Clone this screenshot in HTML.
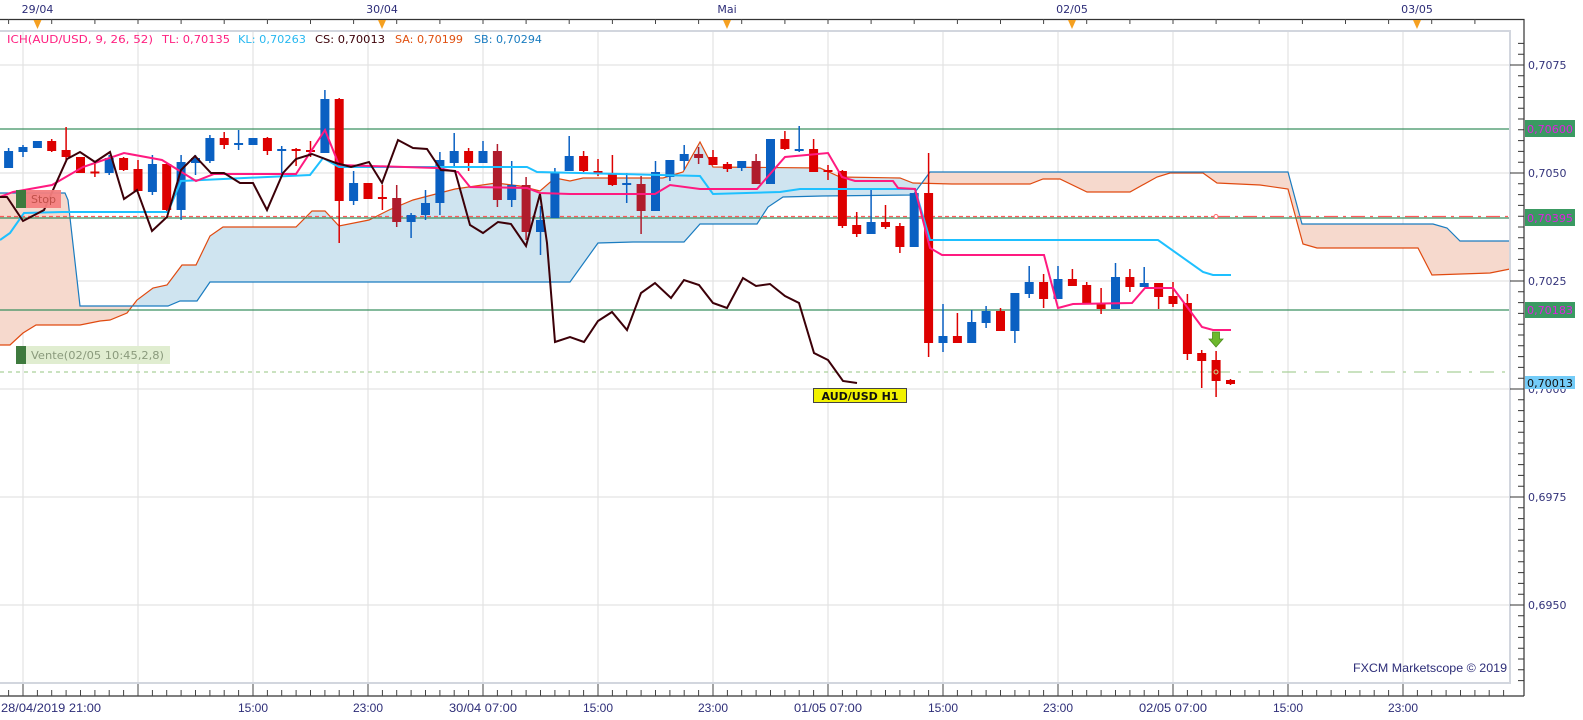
<!DOCTYPE html>
<html><head><meta charset="utf-8"><style>
html,body{margin:0;padding:0;background:#fff;width:1583px;height:720px;overflow:hidden}
svg{display:block}
.t{font-family:"DejaVu Sans","Liberation Sans",sans-serif;font-size:11px}
.n{font-family:"Liberation Sans Narrow","Liberation Sans",sans-serif;font-size:12px;fill:#2d2d78}
</style></head><body>
<svg width="1583" height="720" viewBox="0 0 1583 720" xmlns="http://www.w3.org/2000/svg">
<defs>
<clipPath id="cb"><rect x="137" y="0" width="782" height="720"/></clipPath>
<clipPath id="cs"><rect x="0" y="0" width="137" height="720"/><rect x="919" y="0" width="600" height="720"/></clipPath>
</defs>
<g stroke="#e3e3e3" stroke-width="1.2">
<path d="M23 31V683M138 31V683M253 31V683M368 31V683M483 31V683M598 31V683M713 31V683M828 31V683M943 31V683M1058 31V683M1173 31V683M1288 31V683M1403 31V683"/>
<path d="M0 65H1510M0 173H1510M0 281H1510M0 389H1510M0 497H1510M0 605H1510"/>
</g>
<g id="cloud">
<polygon clip-path="url(#cb)" fill="#cfe4f0" points="0,345 10,345 23,333 36,325 80,325 100,321 110,320 127,313 137,300 153,288 167,285 182,265 196,265 210,236 223,227 296,227 312,211 325,211 339,226 369,220 389,210 413,200 455,189 496,183 520,186 540,191 555,178 570,181 583,178 663,178 683,172 700,142 713,167 820,168 840,177 900,178 913,183 952,184 1030,184 1043,179 1060,179 1087,192 1130,192 1157,177 1170,173 1203,173 1217,183 1260,185 1288,189 1303,244 1317,248 1418,248 1432,275 1490,273 1510,269 1510,241 1460,241 1447,228 1433,224 1302,224 1288,172 930,172 913,195 822,196 783,197 768,207 757,224 700,224 684,242 633,242 598,243 570,282 210,282 197,301 180,301 168,306 80,306 68,200 65,193 0,193"/>
<polygon clip-path="url(#cs)" fill="#f6d9cd" points="0,345 10,345 23,333 36,325 80,325 100,321 110,320 127,313 137,300 153,288 167,285 182,265 196,265 210,236 223,227 296,227 312,211 325,211 339,226 369,220 389,210 413,200 455,189 496,183 520,186 540,191 555,178 570,181 583,178 663,178 683,172 700,142 713,167 820,168 840,177 900,178 913,183 952,184 1030,184 1043,179 1060,179 1087,192 1130,192 1157,177 1170,173 1203,173 1217,183 1260,185 1288,189 1303,244 1317,248 1418,248 1432,275 1490,273 1510,269 1510,241 1460,241 1447,228 1433,224 1302,224 1288,172 930,172 913,195 822,196 783,197 768,207 757,224 700,224 684,242 633,242 598,243 570,282 210,282 197,301 180,301 168,306 80,306 68,200 65,193 0,193"/>
</g>
<polyline fill="none" stroke="#e04a10" stroke-width="1.2" points="0,345 10,345 23,333 36,325 80,325 100,321 110,320 127,313 137,300 153,288 167,285 182,265 196,265 210,236 223,227 296,227 312,211 325,211 339,226 369,220 389,210 413,200 455,189 496,183 520,186 540,191 555,178 570,181 583,178 663,178 683,172 700,142 713,167 820,168 840,177 900,178 913,183 952,184 1030,184 1043,179 1060,179 1087,192 1130,192 1157,177 1170,173 1203,173 1217,183 1260,185 1288,189 1303,244 1317,248 1418,248 1432,275 1490,273 1510,269"/>
<polyline fill="none" stroke="#1a7cc0" stroke-width="1.2" points="0,193 65,193 68,200 80,306 168,306 180,301 197,301 210,282 570,282 598,243 633,242 684,242 700,224 757,224 768,207 783,197 822,196 913,195 930,172 1288,172 1302,224 1433,224 1447,228 1460,241 1510,241"/>
<g stroke="#3a9060" stroke-width="1.3"><path d="M0 129H1510M0 218H1510M0 310H1510"/></g>
<path d="M0 216.5H1216" stroke="#ff5a5a" stroke-width="1.2" stroke-dasharray="4 3"/>
<path d="M1216 216.5H1510" stroke="#ff5a5a" stroke-width="1.2" stroke-dasharray="14 5 3 5"/>
<path d="M0 372H1216" stroke="#aad09a" stroke-width="1.2" stroke-dasharray="4 4"/>
<path d="M1216 372H1510" stroke="#aad09a" stroke-width="1.2" stroke-dasharray="14 8 3 8"/>
<circle cx="1216" cy="216.5" r="2" fill="#fff" stroke="#ff6a6a"/>
<g fill="#0a60c2" stroke="#0a60c2" stroke-width="1.5">
<g transform="translate(8.6,0)"><path d="M0 148V168"/><rect x="-4.5" y="151" width="9" height="17" stroke="none"/></g>
<g transform="translate(23,0)"><path d="M0 145V157"/><rect x="-4.5" y="147" width="9" height="5" stroke="none"/></g>
<g transform="translate(37.4,0)"><rect x="-4.5" y="141" width="9" height="7" stroke="none"/></g>
<g transform="translate(109.2,0)"><path d="M0 155V175"/><rect x="-4.5" y="158" width="9" height="15" stroke="none"/></g>
<g transform="translate(152.4,0)"><path d="M0 155V195"/><rect x="-4.5" y="164" width="9" height="28" stroke="none"/></g>
<g transform="translate(181.1,0)"><path d="M0 155V220"/><rect x="-4.5" y="162" width="9" height="48" stroke="none"/></g>
<g transform="translate(195.5,0)"><path d="M0 155V175"/><rect x="-4.5" y="158" width="9" height="5" stroke="none"/></g>
<g transform="translate(209.9,0)"><path d="M0 135V163"/><rect x="-4.5" y="138" width="9" height="23" stroke="none"/></g>
<g transform="translate(238.6,0)"><path d="M0 130V150"/><rect x="-4.5" y="143" width="9" height="2" stroke="none"/></g>
<g transform="translate(253,0)"><rect x="-4.5" y="138" width="9" height="7" stroke="none"/></g>
<g transform="translate(281.7,0)"><path d="M0 146V176"/><rect x="-4.5" y="149" width="9" height="2" stroke="none"/></g>
<g transform="translate(324.9,0)"><path d="M0 90V153"/><rect x="-4.5" y="99" width="9" height="54" stroke="none"/></g>
<g transform="translate(353.6,0)"><path d="M0 171V205"/><rect x="-4.5" y="183" width="9" height="18" stroke="none"/></g>
<g transform="translate(411.1,0)"><path d="M0 213V238"/><rect x="-4.5" y="215" width="9" height="7" stroke="none"/></g>
<g transform="translate(425.5,0)"><path d="M0 190V220"/><rect x="-4.5" y="203" width="9" height="12" stroke="none"/></g>
<g transform="translate(439.9,0)"><path d="M0 152V215"/><rect x="-4.5" y="160" width="9" height="43" stroke="none"/></g>
<g transform="translate(454.2,0)"><path d="M0 133V166"/><rect x="-4.5" y="151" width="9" height="12" stroke="none"/></g>
<g transform="translate(483,0)"><path d="M0 141V163"/><rect x="-4.5" y="151" width="9" height="12" stroke="none"/></g>
<g transform="translate(511.7,0)"><path d="M0 161V207"/><rect x="-4.5" y="185" width="9" height="15" stroke="none"/></g>
<g transform="translate(540.5,0)"><path d="M0 206V255"/><rect x="-4.5" y="220" width="9" height="12" stroke="none"/></g>
<g transform="translate(554.9,0)"><path d="M0 168V218"/><rect x="-4.5" y="172" width="9" height="46" stroke="none"/></g>
<g transform="translate(569.2,0)"><path d="M0 136V171"/><rect x="-4.5" y="156" width="9" height="15" stroke="none"/></g>
<g transform="translate(626.7,0)"><path d="M0 173V203"/><rect x="-4.5" y="183" width="9" height="2" stroke="none"/></g>
<g transform="translate(655.5,0)"><path d="M0 161V211"/><rect x="-4.5" y="172" width="9" height="39" stroke="none"/></g>
<g transform="translate(669.9,0)"><path d="M0 160V181"/><rect x="-4.5" y="160" width="9" height="17" stroke="none"/></g>
<g transform="translate(684.2,0)"><path d="M0 145V170"/><rect x="-4.5" y="154" width="9" height="7" stroke="none"/></g>
<g transform="translate(741.7,0)"><path d="M0 161V171"/><rect x="-4.5" y="161" width="9" height="7" stroke="none"/></g>
<g transform="translate(770.5,0)"><rect x="-4.5" y="139" width="9" height="45" stroke="none"/></g>
<g transform="translate(799.2,0)"><path d="M0 126V152"/><rect x="-4.5" y="149" width="9" height="2" stroke="none"/></g>
<g transform="translate(871.1,0)"><path d="M0 190V234"/><rect x="-4.5" y="222" width="9" height="12" stroke="none"/></g>
<g transform="translate(914.2,0)"><rect x="-4.5" y="193" width="9" height="54" stroke="none"/></g>
<g transform="translate(943,0)"><path d="M0 304V352"/><rect x="-4.5" y="336" width="9" height="7" stroke="none"/></g>
<g transform="translate(971.7,0)"><path d="M0 310V343"/><rect x="-4.5" y="322" width="9" height="21" stroke="none"/></g>
<g transform="translate(986.1,0)"><path d="M0 306V328"/><rect x="-4.5" y="311" width="9" height="12" stroke="none"/></g>
<g transform="translate(1014.9,0)"><path d="M0 293V343"/><rect x="-4.5" y="293" width="9" height="38" stroke="none"/></g>
<g transform="translate(1029.2,0)"><path d="M0 266V298"/><rect x="-4.5" y="282" width="9" height="12" stroke="none"/></g>
<g transform="translate(1058,0)"><path d="M0 266V299"/><rect x="-4.5" y="279" width="9" height="20" stroke="none"/></g>
<g transform="translate(1115.5,0)"><path d="M0 263V309"/><rect x="-4.5" y="277" width="9" height="32" stroke="none"/></g>
<g transform="translate(1144.2,0)"><path d="M0 267V287"/><rect x="-4.5" y="283" width="9" height="4" stroke="none"/></g>
</g>
<g fill="#dd0000" stroke="#dd0000" stroke-width="1.5">
<g transform="translate(51.7,0)"><path d="M0 139V152"/><rect x="-4.5" y="141" width="9" height="10" stroke="none"/></g>
<g transform="translate(66.1,0)"><path d="M0 127V160"/><rect x="-4.5" y="150" width="9" height="7" stroke="none"/></g>
<g transform="translate(80.5,0)"><rect x="-4.5" y="157" width="9" height="16" stroke="none"/></g>
<g transform="translate(94.9,0)"><path d="M0 163V177"/><rect x="-4.5" y="171.5" width="9" height="2" stroke="none"/></g>
<g transform="translate(123.6,0)"><path d="M0 157V171"/><rect x="-4.5" y="158" width="9" height="12" stroke="none"/></g>
<g transform="translate(138,0)"><path d="M0 160V191"/><rect x="-4.5" y="169" width="9" height="22" stroke="none"/></g>
<g transform="translate(166.7,0)"><path d="M0 163V211"/><rect x="-4.5" y="164" width="9" height="46" stroke="none"/></g>
<g transform="translate(224.2,0)"><path d="M0 132V149"/><rect x="-4.5" y="138" width="9" height="7" stroke="none"/></g>
<g transform="translate(267.4,0)"><path d="M0 137V155"/><rect x="-4.5" y="138" width="9" height="13" stroke="none"/></g>
<g transform="translate(296.1,0)"><path d="M0 148V166"/><rect x="-4.5" y="149" width="9" height="2" stroke="none"/></g>
<g transform="translate(310.5,0)"><path d="M0 141V157"/><rect x="-4.5" y="150" width="9" height="2" stroke="none"/></g>
<g transform="translate(339.2,0)"><path d="M0 98V243"/><rect x="-4.5" y="99" width="9" height="102" stroke="none"/></g>
<g transform="translate(368,0)"><rect x="-4.5" y="183" width="9" height="16" stroke="none"/></g>
<g transform="translate(382.4,0)"><path d="M0 185V210"/><rect x="-4.5" y="197" width="9" height="2" stroke="none"/></g>
<g transform="translate(468.6,0)"><path d="M0 148V171"/><rect x="-4.5" y="151" width="9" height="12" stroke="none"/></g>
<g transform="translate(583.6,0)"><path d="M0 151V172"/><rect x="-4.5" y="156" width="9" height="15" stroke="none"/></g>
<g transform="translate(598,0)"><path d="M0 159V176"/><rect x="-4.5" y="171" width="9" height="2" stroke="none"/></g>
<g transform="translate(612.4,0)"><path d="M0 155V186"/><rect x="-4.5" y="173" width="9" height="12" stroke="none"/></g>
<g transform="translate(713,0)"><path d="M0 150V165"/><rect x="-4.5" y="157" width="9" height="8" stroke="none"/></g>
<g transform="translate(727.4,0)"><path d="M0 162V172"/><rect x="-4.5" y="164" width="9" height="5" stroke="none"/></g>
<g transform="translate(784.9,0)"><path d="M0 131V150"/><rect x="-4.5" y="139" width="9" height="10" stroke="none"/></g>
<g transform="translate(813.6,0)"><path d="M0 139V172"/><rect x="-4.5" y="149" width="9" height="23" stroke="none"/></g>
<g transform="translate(828,0)"><path d="M0 165V180"/><rect x="-4.5" y="170" width="9" height="2" stroke="none"/></g>
<g transform="translate(842.4,0)"><path d="M0 170V228"/><rect x="-4.5" y="171" width="9" height="55" stroke="none"/></g>
<g transform="translate(856.7,0)"><path d="M0 212V237"/><rect x="-4.5" y="225" width="9" height="9" stroke="none"/></g>
<g transform="translate(885.5,0)"><path d="M0 205V229"/><rect x="-4.5" y="222" width="9" height="5" stroke="none"/></g>
<g transform="translate(899.9,0)"><path d="M0 223V253"/><rect x="-4.5" y="226" width="9" height="21" stroke="none"/></g>
<g transform="translate(928.6,0)"><path d="M0 153V357"/><rect x="-4.5" y="193" width="9" height="150" stroke="none"/></g>
<g transform="translate(957.4,0)"><path d="M0 313V343"/><rect x="-4.5" y="336" width="9" height="7" stroke="none"/></g>
<g transform="translate(1000.5,0)"><path d="M0 308V331"/><rect x="-4.5" y="311" width="9" height="20" stroke="none"/></g>
<g transform="translate(1043.6,0)"><path d="M0 274V308"/><rect x="-4.5" y="282" width="9" height="17" stroke="none"/></g>
<g transform="translate(1072.4,0)"><path d="M0 269V286"/><rect x="-4.5" y="279" width="9" height="7" stroke="none"/></g>
<g transform="translate(1086.7,0)"><path d="M0 282V303"/><rect x="-4.5" y="285" width="9" height="18" stroke="none"/></g>
<g transform="translate(1101.1,0)"><path d="M0 288V314"/><rect x="-4.5" y="303" width="9" height="6" stroke="none"/></g>
<g transform="translate(1129.9,0)"><path d="M0 269V292"/><rect x="-4.5" y="277" width="9" height="10" stroke="none"/></g>
<g transform="translate(1158.6,0)"><path d="M0 283V309"/><rect x="-4.5" y="283" width="9" height="14" stroke="none"/></g>
<g transform="translate(1173,0)"><path d="M0 282V307"/><rect x="-4.5" y="296" width="9" height="8" stroke="none"/></g>
<g transform="translate(1187.4,0)"><path d="M0 294V360"/><rect x="-4.5" y="303" width="9" height="51" stroke="none"/></g>
<g transform="translate(1201.7,0)"><path d="M0 350V388"/><rect x="-4.5" y="353" width="9" height="8" stroke="none"/></g>
<g transform="translate(1216.1,0)"><path d="M0 351V397"/><rect x="-4.5" y="360" width="9" height="21" stroke="none"/></g>
<g transform="translate(1230.5,0)"><path d="M0 379V385"/><rect x="-4.5" y="380" width="9" height="4" stroke="none"/></g>
</g>
<g fill="#b01c2c" stroke="#b01c2c" stroke-width="1.5">
<g transform="translate(396.7,0)"><path d="M0 185V227"/><rect x="-4.5" y="198" width="9" height="24" stroke="none"/></g>
<g transform="translate(497.4,0)"><path d="M0 144V207"/><rect x="-4.5" y="151" width="9" height="49" stroke="none"/></g>
<g transform="translate(526.1,0)"><path d="M0 177V240"/><rect x="-4.5" y="185" width="9" height="47" stroke="none"/></g>
<g transform="translate(641.1,0)"><path d="M0 176V234"/><rect x="-4.5" y="184" width="9" height="27" stroke="none"/></g>
<g transform="translate(698.6,0)"><path d="M0 147V164"/><rect x="-4.5" y="154" width="9" height="4" stroke="none"/></g>
<g transform="translate(756.1,0)"><path d="M0 154V184"/><rect x="-4.5" y="161" width="9" height="23" stroke="none"/></g>
</g>
<circle cx="1216" cy="372" r="2" fill="none" stroke="#c8d890"/>
<polyline fill="none" stroke="#1ec0ff" stroke-width="2" points="0,240 10,233 24,213 62,212 168,212 181,181 310,175 323,158 339,167 527,167 537,172 700,176 713,194 780,192 800,189 915,189 930,240 1158,240 1203,272 1213,275 1231,275"/>
<polyline fill="none" stroke="#ff1a80" stroke-width="2" points="0,197 13,192 52,185 83,167 124,153 162,160 196,181 214,174 296,174 325,130 339,165 437,168 458,172 470,187 527,188 540,193 570,194 655,194 670,185 700,189 757,189 785,157 828,153 842,177 855,181 893,181 898,188 915,189 930,248 942,255 1044,255 1058,308 1073,304 1132,303 1145,288 1173,288 1202,327 1213,330 1231,330"/>
<polyline fill="none" stroke="#3c0008" stroke-width="2" points="0,197 7,197 23,221 44,210 67,159 80,152 95,162 110,152 124,199 137,190 152,231 167,217 181,170 195,156 211,173 224,173 240,183 253,183 267,210 283,173 296,159 312,154 336,163 351,167 369,162 382,183 398,140 413,148 427,149 441,170 455,171 470,225 483,233 498,222 511,224 526,246 540,194 547,243 555,342 570,337 584,342 598,321 612,312 627,330 641,293 655,283 671,298 684,280 699,285 713,303 727,308 743,278 756,286 770,284 785,296 799,303 814,353 828,360 843,381 857,383"/>
<path d="M1212.5 332H1219.5V339H1223L1216 347L1209 339H1212.5Z" fill="#6cb82c" stroke="#4a8a1c" stroke-width="0.8"/>
<rect x="16" y="190" width="10" height="18" fill="#3e7a3e"/>
<rect x="26" y="190" width="35" height="18" fill="#f37e7e" opacity="0.95"/>
<text x="31" y="203" class="t" fill="#c0504a" font-size="12">Stop</text>
<rect x="16" y="346" width="10" height="18" fill="#3e7a3e"/>
<rect x="26" y="346" width="144" height="18" fill="#e0edd0"/>
<text x="31" y="359" class="t" fill="#8a9a7c" font-size="12" textLength="133" lengthAdjust="spacingAndGlyphs">Vente(02/05 10:45,2,8)</text>
<rect x="813.5" y="388.5" width="93" height="14" fill="#f2f200" stroke="#444" stroke-width="1"/>
<text x="860" y="400" class="t" text-anchor="middle" font-weight="bold" fill="#111">AUD/USD H1</text>
<text y="43" class="t" font-size="12"><tspan x="7" fill="#ff2080" textLength="146" lengthAdjust="spacingAndGlyphs">ICH(AUD/USD, 9, 26, 52)</tspan><tspan x="162" fill="#ff2080" textLength="68" lengthAdjust="spacingAndGlyphs">TL: 0,70135</tspan><tspan x="238" fill="#28b8f0" textLength="68" lengthAdjust="spacingAndGlyphs">KL: 0,70263</tspan><tspan x="315" fill="#3c0008" textLength="70" lengthAdjust="spacingAndGlyphs">CS: 0,70013</tspan><tspan x="395" fill="#e05010" textLength="68" lengthAdjust="spacingAndGlyphs">SA: 0,70199</tspan><tspan x="474" fill="#1a7cc0" textLength="68" lengthAdjust="spacingAndGlyphs">SB: 0,70294</tspan></text>
<path d="M0 31H1510V683H0" fill="none" stroke="#d2d6de" stroke-width="2"/>
<path d="M0 19.5H1524V696" fill="none" stroke="#333" stroke-width="1.2"/>
<g stroke="#444" stroke-width="1"><path d="M8.6 19V24M51.7 19V24M94.9 19V24M138 19V24M181.1 19V24M224.2 19V24M267.4 19V24M310.5 19V24M353.6 19V24M396.7 19V24M439.9 19V24M483 19V24M526.1 19V24M569.2 19V24M612.4 19V24M655.5 19V24M698.6 19V24M741.7 19V24M784.9 19V24M828 19V24M871.1 19V24M914.2 19V24M957.4 19V24M1000.5 19V24M1043.6 19V24M1086.7 19V24M1129.9 19V24M1173 19V24M1216.1 19V24M1259.2 19V24M1302.4 19V24M1345.5 19V24M1388.6 19V24M1431.7 19V24M1474.9 19V24"/></g>
<g fill="#f5a020"><path d="M33.5 20H41.5L37.5 29Z"/><path d="M378 20H386L382 29Z"/><path d="M723 20H731L727 29Z"/><path d="M1068 20H1076L1072 29Z"/><path d="M1413 20H1421L1417 29Z"/></g>
<g class="t" fill="#2d2d78" text-anchor="middle" font-size="12"><text x="37.5" y="13">29/04</text><text x="382" y="13">30/04</text><text x="727" y="13">Mai</text><text x="1072" y="13">02/05</text><text x="1417" y="13">03/05</text></g>
<g stroke="#333" stroke-width="1"><path d="M1510 65H1524M1510 173H1524M1510 281H1524M1510 389H1524M1510 497H1524M1510 605H1524"/>
<path d="M1518 43.4H1524M1518 54.2H1524M1518 75.8H1524M1518 86.6H1524M1518 97.4H1524M1518 108.2H1524M1518 119H1524M1518 129.8H1524M1518 140.6H1524M1518 151.4H1524M1518 162.2H1524M1518 183.8H1524M1518 194.6H1524M1518 205.4H1524M1518 216.2H1524M1518 227H1524M1518 237.8H1524M1518 248.6H1524M1518 259.4H1524M1518 270.2H1524M1518 291.8H1524M1518 302.6H1524M1518 313.4H1524M1518 324.2H1524M1518 335H1524M1518 345.8H1524M1518 356.6H1524M1518 367.4H1524M1518 378.2H1524M1518 399.8H1524M1518 410.6H1524M1518 421.4H1524M1518 432.2H1524M1518 443H1524M1518 453.8H1524M1518 464.6H1524M1518 475.4H1524M1518 486.2H1524M1518 507.8H1524M1518 518.6H1524M1518 529.4H1524M1518 540.2H1524M1518 551H1524M1518 561.8H1524M1518 572.6H1524M1518 583.4H1524M1518 594.2H1524M1518 615.8H1524M1518 626.6H1524M1518 637.4H1524M1518 648.2H1524M1518 659H1524M1518 669.8H1524M1518 680.6H1524"/></g>
<g class="t" fill="#33337a" font-size="12"><text x="1528" y="69">0,7075</text><text x="1528" y="177">0,7050</text><text x="1528" y="285">0,7025</text><text x="1528" y="393">0,7000</text><text x="1528" y="501">0,6975</text><text x="1528" y="609">0,6950</text></g>
<rect x="1525" y="120" width="50" height="17" fill="#3a9a62"/><text x="1527" y="133" class="t" font-size="12" fill="#e020e0" textLength="46" lengthAdjust="spacingAndGlyphs">0,70600</text>
<rect x="1525" y="209" width="50" height="17" fill="#3a9a62"/><text x="1527" y="222" class="t" font-size="12" fill="#e020e0" textLength="46" lengthAdjust="spacingAndGlyphs">0,70395</text>
<rect x="1525" y="302" width="50" height="16" fill="#3a9a62"/><text x="1527" y="314" class="t" font-size="12" fill="#e020e0" textLength="46" lengthAdjust="spacingAndGlyphs">0,70183</text>
<rect x="1525" y="376" width="50" height="13" fill="#74ccf8"/><text x="1527" y="387" class="t" font-size="12" fill="#111" textLength="46" lengthAdjust="spacingAndGlyphs">0,70013</text>
<path d="M0 696H1524" stroke="#333" stroke-width="1.2"/>
<g stroke="#444" stroke-width="1"><path d="M23 684V696M138 684V696M253 684V696M368 684V696M483 684V696M598 684V696M713 684V696M828 684V696M943 684V696M1058 684V696M1173 684V696M1288 684V696M1403 684V696"/>
<path d="M8.6 690V696M37.4 690V696M51.7 690V696M66.1 690V696M80.5 690V696M94.9 690V696M109.2 690V696M123.6 690V696M152.4 690V696M166.7 690V696M181.1 690V696M195.5 690V696M209.9 690V696M224.2 690V696M238.6 690V696M267.4 690V696M281.7 690V696M296.1 690V696M310.5 690V696M324.9 690V696M339.2 690V696M353.6 690V696M382.4 690V696M396.7 690V696M411.1 690V696M425.5 690V696M439.9 690V696M454.2 690V696M468.6 690V696M497.4 690V696M511.7 690V696M526.1 690V696M540.5 690V696M554.9 690V696M569.2 690V696M583.6 690V696M612.4 690V696M626.7 690V696M641.1 690V696M655.5 690V696M669.9 690V696M684.2 690V696M698.6 690V696M727.4 690V696M741.7 690V696M756.1 690V696M770.5 690V696M784.9 690V696M799.2 690V696M813.6 690V696M842.4 690V696M856.7 690V696M871.1 690V696M885.5 690V696M899.9 690V696M914.2 690V696M928.6 690V696M957.4 690V696M971.7 690V696M986.1 690V696M1000.5 690V696M1014.9 690V696M1029.2 690V696M1043.6 690V696M1072.4 690V696M1086.7 690V696M1101.1 690V696M1115.5 690V696M1129.9 690V696M1144.2 690V696M1158.6 690V696M1187.4 690V696M1201.7 690V696M1216.1 690V696M1230.5 690V696M1244.9 690V696M1259.2 690V696M1273.6 690V696M1302.4 690V696M1316.7 690V696M1331.1 690V696M1345.5 690V696M1359.9 690V696M1374.2 690V696M1388.6 690V696M1417.4 690V696M1431.7 690V696M1446.1 690V696M1460.5 690V696M1474.9 690V696M1489.2 690V696M1503.6 690V696"/></g>
<g class="n" text-anchor="middle"><text x="51" y="712" textLength="100" lengthAdjust="spacingAndGlyphs">28/04/2019 21:00</text><text x="253" y="712">15:00</text><text x="368" y="712">23:00</text><text x="483" y="712" textLength="68" lengthAdjust="spacingAndGlyphs">30/04 07:00</text><text x="598" y="712">15:00</text><text x="713" y="712">23:00</text><text x="828" y="712" textLength="68" lengthAdjust="spacingAndGlyphs">01/05 07:00</text><text x="943" y="712">15:00</text><text x="1058" y="712">23:00</text><text x="1173" y="712" textLength="68" lengthAdjust="spacingAndGlyphs">02/05 07:00</text><text x="1288" y="712">15:00</text><text x="1403" y="712">23:00</text></g>
<text x="1353" y="672" class="n" fill="#2d2d60" textLength="154" lengthAdjust="spacingAndGlyphs">FXCM Marketscope © 2019</text>
</svg>
</body></html>
